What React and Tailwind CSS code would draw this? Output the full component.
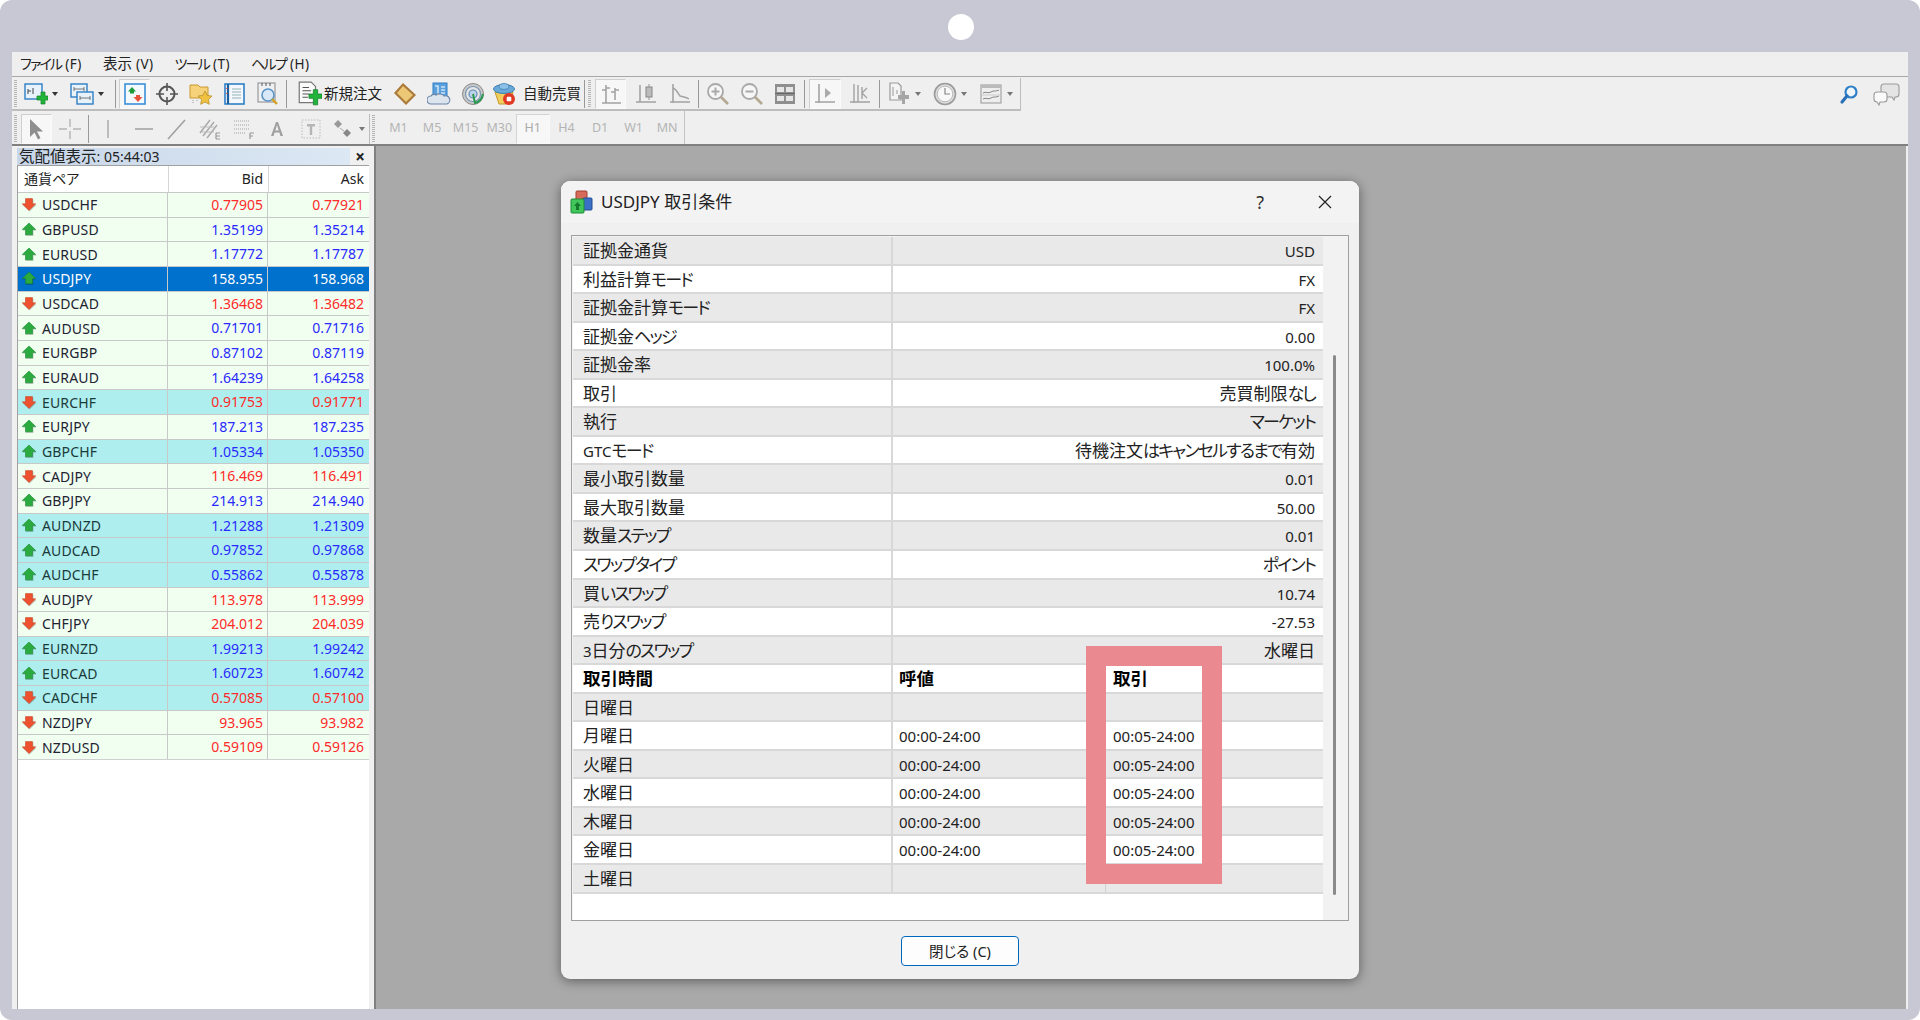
import React from "react";

const FONT = "font-['Noto_Sans','Noto_Sans_CJK_JP',sans-serif] [font-feature-settings:'palt']";

const quotes = [
  ["USDCHF","0.77905","0.77921","d",0],["GBPUSD","1.35199","1.35214","u",0],["EURUSD","1.17772","1.17787","u",0],
  ["USDJPY","158.955","158.968","u",2],["USDCAD","1.36468","1.36482","d",0],["AUDUSD","0.71701","0.71716","u",0],
  ["EURGBP","0.87102","0.87119","u",0],["EURAUD","1.64239","1.64258","u",0],["EURCHF","0.91753","0.91771","d",1],
  ["EURJPY","187.213","187.235","u",0],["GBPCHF","1.05334","1.05350","u",1],["CADJPY","116.469","116.491","d",0],
  ["GBPJPY","214.913","214.940","u",0],["AUDNZD","1.21288","1.21309","u",1],["AUDCAD","0.97852","0.97868","u",1],
  ["AUDCHF","0.55862","0.55878","u",1],["AUDJPY","113.978","113.999","d",0],["CHFJPY","204.012","204.039","d",0],
  ["EURNZD","1.99213","1.99242","u",1],["EURCAD","1.60723","1.60742","u",1],["CADCHF","0.57085","0.57100","d",1],
  ["NZDJPY","93.965","93.982","d",0],["NZDUSD","0.59109","0.59126","d",0],
];

const specs = [
  ["証拠金通貨","USD"],["利益計算モード","FX"],["証拠金計算モード","FX"],["証拠金ヘッジ","0.00"],["証拠金率","100.0%"],
  ["取引","売買制限なし"],["執行","マーケット"],["GTCモード","待機注文はキャンセルするまで有効"],["最小取引数量","0.01"],
  ["最大取引数量","50.00"],["数量ステップ","0.01"],["スワップタイプ","ポイント"],["買いスワップ","10.74"],["売りスワップ","-27.53"],
  ["3日分のスワップ","水曜日"],
];

const days = [
  ["日曜日","",""],["月曜日","00:00-24:00","00:05-24:00"],["火曜日","00:00-24:00","00:05-24:00"],["水曜日","00:00-24:00","00:05-24:00"],
  ["木曜日","00:00-24:00","00:05-24:00"],["金曜日","00:00-24:00","00:05-24:00"],["土曜日","",""],
];

// The original UI font sets kana and Latin narrower than its kanji.
function T({ children, latin = "text-[15px]", kana = "tracking-[-1.8px]" }) {
  if (!children) return null;
  return String(children)
    .split(/([\x20-\x7e]+|[\u3040-\u30ff]+)/)
    .filter(Boolean)
    .map((run, i) => {
      if (/^[\x20-\x7e]+$/.test(run)) return <span key={i} className={latin}>{run}</span>;
      if (/^[\u3040-\u30ff]+$/.test(run)) return <span key={i} className={kana}>{run}</span>;
      return <span key={i}>{run}</span>;
    });
}

function Arrow({ dir }) {
  const up = dir === "u";
  return (
    <svg width="15" height="15" viewBox="0 0 15 15" className="shrink-0">
      <path d={up ? "M7.5 2 14.5 8.5H11.5V14H3.5V8.5H.5Z" : "M7.5 14.5 14.5 8H11.5V2.5H3.5V8H.5Z"} fill="#00000030" />
      <path
        d={up ? "M7 1 13.8 7.6H10.5V12.8H3.5V7.6H.2Z" : "M7 13.4 13.8 6.8H10.5V1.6H3.5V6.8H.2Z"}
        fill={up ? "#2bab3f" : "#ee5130"}
        stroke={up ? "#12802a" : "#c2421f"}
        strokeWidth=".5"
      />
    </svg>
  );
}

function Caret() {
  return <span className="ml-[4px] h-0 w-0 border-x-[3.5px] border-t-[4px] border-x-transparent border-t-[#333]" />;
}
function GreyCaret() {
  return <span className="ml-[4px] h-0 w-0 border-x-[3.5px] border-t-[4px] border-x-transparent border-t-[#777]" />;
}
function Sep({ cls = "mx-[4px]" }) {
  return <span className={`h-[28px] w-px shrink-0 bg-[#999] ${cls}`} />;
}
function Grip() {
  return <span className="ml-[1px] mr-[4px] h-[28px] w-[3px] shrink-0 bg-[repeating-linear-gradient(#b5b5b5_0_1px,transparent_1px_2px)]" />;
}
function Slot({ w = 33, pressed, children }) {
  return (
    <span
      style={{ width: w }}
      className={`flex h-[30px] shrink-0 items-center justify-center ${pressed ? "border border-[#cfcfcf] border-r-[#fafafa] border-b-[#fafafa] bg-[#f7f7f7]" : ""}`}
    >
      {children}
    </span>
  );
}
function Ic({ s = 24, children }) {
  return <svg width={s} height={s} viewBox="0 0 24 24" fill="none">{children}</svg>;
}

const Plus = ({ c = "#22b43a", x = 0, y = 0 }) => (
  <path transform={`translate(${x} ${y})`} d="M13 10h4v-4h4v4h3v4h-3v4h-4v-4h-4z" fill={c} stroke={c === "#22b43a" ? "#11802a" : "#888"} strokeWidth=".7" />
);

const NewChart = () => (
  <Ic>
    <rect x="1" y="2" width="17" height="15" fill="#e8f2fb" stroke="#2f7fc6" strokeWidth="1.4" />
    <path d="M4 7v5M4 9h3M9 6v6" stroke="#444" strokeWidth="1" />
    <Plus y="4" />
  </Ic>
);
const Profiles = () => (
  <Ic>
    <rect x="1" y="2" width="16" height="13" fill="#e8f2fb" stroke="#2f7fc6" strokeWidth="1.4" />
    <rect x="7" y="10" width="16" height="12" fill="#e8f2fb" stroke="#2f7fc6" strokeWidth="1.4" />
    <path d="M4 7h10M4 5v4M14 5v4M10 16h10M10 14v4M20 14v4" stroke="#555" strokeWidth=".8" />
  </Ic>
);
const Watch = () => (
  <Ic>
    <rect x="2" y="2" width="20" height="20" fill="#f4f9fe" stroke="#3a8fd6" strokeWidth="1.6" />
    <path d="M9 5 13 9.5H11V11.5H7V9.5H5Z" fill="#1f9a3a" />
    <path d="M15 20 19.5 15H17V13H13V15H10.5Z" fill="#e8523a" />
  </Ic>
);
const Cross = () => (
  <Ic>
    <circle cx="12" cy="12" r="7.5" stroke="#555" strokeWidth="2" />
    <path d="M12 1v8M12 15v8M1 12h8M15 12h8" stroke="#555" strokeWidth="1.6" />
  </Ic>
);
const FolderStar = () => (
  <Ic>
    <path d="M1 3h8l2 2h8v11H1z" fill="#f6d27a" stroke="#c99a30" strokeWidth="1" />
    <path d="M4 18v3M8 18v2" stroke="#999" strokeWidth="1" strokeDasharray="1 1" />
    <path d="m16 9 2.2 4.4 4.8.7-3.5 3.4.8 4.8-4.3-2.3-4.3 2.3.8-4.8L9 14.1l4.8-.7z" fill="#f0c040" stroke="#b8902a" strokeWidth=".8" />
  </Ic>
);
const Book = () => (
  <Ic>
    <rect x="3" y="2" width="19" height="20" fill="#f4f8fc" stroke="#2f7fc6" strokeWidth="1.6" />
    <path d="M6 2v20" stroke="#1c5f9c" strokeWidth="2.2" />
    <path d="M10 7h9M10 10h9M10 13h9M10 16h9" stroke="#8aa" strokeWidth=".9" />
    <path d="M5 6v1M5 11v1" stroke="#d33" strokeWidth="1.4" />
  </Ic>
);
const Journal = () => (
  <Ic>
    <rect x="2" y="1" width="17" height="19" fill="#eef0f2" stroke="#9a9a9a" strokeWidth="1.2" />
    <path d="M6 1V4M10 1V4M14 1V4" stroke="#555" strokeWidth="1" />
    <circle cx="12" cy="13" r="6" fill="#d8e8f6" stroke="#5a94c8" strokeWidth="1.6" />
    <path d="m16 17 5 5" stroke="#d4a020" strokeWidth="2.4" />
  </Ic>
);
const NewOrder = () => (
  <Ic s={26}>
    <path d="M3 1h11l4 4v15H3z" fill="#fafafa" stroke="#777" strokeWidth="1.1" />
    <path d="M6 6h6M6 9h8M6 12h6M6 15h5" stroke="#555" strokeWidth="1" />
    <path d="M12 12h4V8h4v4h4v4h-4v6h-4v-6h-4z" fill="#22b43a" stroke="#11802a" strokeWidth=".7" />
  </Ic>
);
const Editor = () => (
  <Ic>
    <path d="M10 1 23 13 13 23 1 11Z" fill="#a97a3c" strokeLinejoin="round" />
    <path d="M10 4 20 13 13 20 4 11Z" fill="#ecc776" />
  </Ic>
);
const CloudDoc = () => (
  <Ic>
    <rect x="6" y="1" width="14" height="14" fill="#5aa0dc" stroke="#2f7fc6" strokeWidth="1" />
    <path d="M8 4h3v8M14 5h4M14 8h4M14 11h4" stroke="#fff" strokeWidth="1.1" />
    <path d="M4 22a4 4 0 0 1 0-8c1-2 4-2 5-1 2-2 7-1 8 1a4 4 0 0 1 3 8z" fill="#dce4ee" stroke="#6b86a8" strokeWidth="1.1" />
  </Ic>
);
const Signal = () => (
  <Ic>
    <circle cx="12" cy="12" r="10.5" fill="#c8c8c8" stroke="#8a8a8a" strokeWidth="1" />
    <circle cx="12" cy="12" r="7.5" fill="#e6e6e6" stroke="#7b96b4" strokeWidth="1.2" />
    <circle cx="12" cy="12" r="4" fill="#bcd2e8" stroke="#5f8db8" strokeWidth="1.2" />
    <path d="M12 12 14 21c4-1 7-4 8-9" stroke="#2a9a50" strokeWidth="2" />
  </Ic>
);
const Expert = () => (
  <Ic>
    <path d="M3 10h18l-3 12H7z" fill="#f2cd5c" stroke="#c39a30" strokeWidth="1" />
    <ellipse cx="12" cy="7" rx="10.5" ry="4.5" fill="#69a9d8" stroke="#3f7fb0" strokeWidth="1" />
    <ellipse cx="12" cy="4.5" rx="5" ry="3" fill="#8cc0e6" stroke="#3f7fb0" strokeWidth=".8" />
    <circle cx="17" cy="17" r="6" fill="#e03a24" />
    <rect x="14.7" y="14.7" width="4.6" height="4.6" rx="1" fill="#fff" />
  </Ic>
);

const grey = "#a3a3a3";
const Bars = () => (
  <Ic>
    <path d="M3 21h19M7 3v18M16 6v12" stroke={grey} strokeWidth="1.6" />
    <path d="M3 8h4M7 6h4M12 10h4M16 8h4" stroke={grey} strokeWidth="1.4" />
  </Ic>
);
const Candle = () => (
  <Ic>
    <path d="M2 20h20M6 3v17" stroke={grey} strokeWidth="1.6" />
    <path d="M15 2v16" stroke={grey} strokeWidth="1.2" />
    <rect x="12" y="5" width="6" height="10" fill="#bbb" stroke="#888" />
  </Ic>
);
const LineCh = () => (
  <Ic>
    <path d="M5 2v19M2 20h20" stroke={grey} strokeWidth="1.6" />
    <path d="M5 6c3 1 5 5 7 8 3 1 6 1 9 3" stroke={grey} strokeWidth="1.5" />
  </Ic>
);
const ZoomIn = ({ minus }) => (
  <Ic>
    <circle cx="9.5" cy="9.5" r="7.5" fill="#f6f6f6" stroke="#a8a8a8" strokeWidth="1.8" />
    <path d="M5.5 9.5h8" stroke="#aaa" strokeWidth="2" />
    {!minus && <path d="M9.5 5.5v8" stroke="#aaa" strokeWidth="2" />}
    <path d="m15 15 7 7" stroke="#b5a890" strokeWidth="2.6" />
  </Ic>
);
const Grid = () => (
  <Ic>
    <rect x="2" y="2" width="20" height="20" fill="#8f8f8f" />
    <path d="M4 5h7v5H4zM13 5h7v5h-7zM4 14h7v5H4zM13 14h7v5h-7z" fill="#e6e6e6" />
    <path d="M2 11.5h20" stroke="#666" />
  </Ic>
);
const Shift = () => (
  <Ic>
    <path d="M6 2v19M2 20h20" stroke={grey} strokeWidth="1.6" />
    <path d="M12 6v10l6-5z" fill="#aaa" />
  </Ic>
);
const AutoS = () => (
  <Ic>
    <path d="M6 2v19M2 20h20M10 3v17" stroke={grey} strokeWidth="1.4" />
    <path d="M14 5v12M14 11l5-5M14 11l5 5" stroke={grey} strokeWidth="1.4" />
  </Ic>
);
const Indic = () => (
  <Ic>
    <path d="M3 1h8l3 3v14H3z" fill="#f4f4f4" stroke="#999" strokeWidth="1.2" />
    <path d="M6 5v9M10 8v4" stroke="#999" />
    <path d="M11 13h4V9h3v4h4v4h-4v5h-3v-5h-4z" fill="#a5a5a5" />
  </Ic>
);
const Clock = () => (
  <Ic>
    <circle cx="12" cy="12" r="10.5" fill="#ddd" stroke="#9a9a9a" strokeWidth="1.6" />
    <circle cx="12" cy="12" r="7.8" fill="#f8f8f8" stroke="#bbb" />
    <path d="M12 6v6h5" stroke="#888" strokeWidth="1.2" />
  </Ic>
);
const Tmpl = () => (
  <Ic>
    <rect x="2" y="3" width="20" height="18" fill="#eee" stroke="#a5a5a5" strokeWidth="1.2" />
    <rect x="2" y="3" width="20" height="3" fill="#bbb" />
    <path d="M4 11c3-2 5 1 8-1s4 0 8-2M4 17c3-2 5 1 8-1s4 0 8-2" stroke="#888" />
    <path d="M3 13h18" stroke="#ccc" />
  </Ic>
);

const Pointer = () => (
  <Ic>
    <path d="M5 2v18l4.5-4.5 3.5 7 2.5-1.5-3.5-6.5H18Z" fill="#8e8e8e" />
  </Ic>
);
const CrossLine = () => (
  <Ic>
    <path d="M12 2v8M12 14v8M1 12h8M15 12h8" stroke="#b5b5b5" strokeWidth="1.4" />
  </Ic>
);
const VLine = () => <Ic><path d="M12 3v18" stroke="#b0b0b0" strokeWidth="1.6" /></Ic>;
const HLine = () => <Ic><path d="M3 12h18" stroke="#a5a5a5" strokeWidth="1.6" /></Ic>;
const TLine = () => <Ic><path d="M3 22 20 3" stroke="#a0a0a0" strokeWidth="1.6" /></Ic>;
const Channel = () => (
  <Ic>
    <path d="M2 16 12 3M5 19 16 5M9 21 19 8" stroke="#aaa" strokeWidth="1.5" />
    <path d="M2 10h14M4 15h12" stroke="#bbb" />
    <path d="M18 16h4M18 19h4M18 22h4M18 16v6" stroke="#999" strokeWidth="1.2" />
  </Ic>
);
const Fibo = () => (
  <Ic>
    <path d="M2 4h16M2 8h16M2 12h16M2 16h12" stroke="#bdbdbd" strokeWidth="1.3" strokeDasharray="1 1" />
    <path d="M18 16h4M18 19h3M18 16v6" stroke="#999" strokeWidth="1.2" />
  </Ic>
);
const Letter = () => (
  <Ic><path d="M11 5h2L18 19h-2.6l-1-3.4H9.6L8.6 19H6ZM10.3 13.4h3.4L12 8Z" fill="#a0a0a0" /></Ic>
);
const LabelT = () => (
  <Ic>
    <rect x="3" y="3" width="18" height="18" stroke="#bbb" strokeDasharray="1.5 1.5" />
    <path d="M8 7h8v2.5h-2.8V18h-2.4V9.5H8z" fill="#b5b5b5" />
  </Ic>
);
const Marks = () => (
  <Ic>
    <path d="m7 3 4 4-4 4-4-4z" fill="#999" />
    <path d="m16 12 4 4-4 4-4-4z" fill="#888" />
    <path d="M9 11l4 3" stroke="#aaa" />
  </Ic>
);

function Magnifier() {
  return (
    <svg width="20" height="22" viewBox="0 0 20 22" fill="none">
      <circle cx="12" cy="8" r="5.5" fill="#eef5fb" stroke="#2f7fc6" strokeWidth="2.2" />
      <path d="M8 12 3 18" stroke="#2a70b8" strokeWidth="3.2" strokeLinecap="round" />
    </svg>
  );
}
function Chat() {
  return (
    <svg width="28" height="24" viewBox="0 0 28 24" fill="none">
      <path d="M11 1h12a3 3 0 0 1 3 3v7a3 3 0 0 1-3 3h-1l-1 3-2-3h-8a3 3 0 0 1-3-3V4a3 3 0 0 1 3-3Z" fill="#e4e4e4" stroke="#9a9a9a" strokeWidth="1.1" />
      <path d="M4 9h7a3 3 0 0 1 3 3v4a3 3 0 0 1-3 3H7l-1 3-2-3a3 3 0 0 1-3-3v-4a3 3 0 0 1 3-3Z" fill="#fafafa" stroke="#9a9a9a" strokeWidth="1.1" />
    </svg>
  );
}

function DialogIcon() {
  return (
    <svg width="23" height="24" viewBox="0 0 23 24">
      <rect x="6" y="1" width="11" height="10" rx="1" fill="#d86a5a" stroke="#a04030" />
      <rect x="13" y="8" width="9" height="12" rx="1" fill="#3a70c8" stroke="#244c90" />
      <rect x="1" y="9" width="13" height="14" rx="1" fill="#3fc75a" stroke="#1f8a36" />
      <path d="M7.5 12 11 16H9v4H6v-4H4z" fill="#167a2c" />
    </svg>
  );
}

function ToolbarTop() {
  return (
    <div className="flex h-[33px] w-[1009px] items-center border-b-2 border-r border-[#bdbdbd] pl-[1px] pt-[1px]">
      <Grip />
      <span className="ml-[3px] flex w-[46px] shrink-0 items-center"><NewChart /><Caret /></span>
      <span className="flex w-[46px] shrink-0 items-center"><Profiles /><Caret /></span>
      <Sep cls="mr-[3px] ml-[-1px]" />
      <Slot w={31} pressed><Watch /></Slot>
      <Slot w={34}><Cross /></Slot>
      <Slot w={33}><FolderStar /></Slot>
      <Slot w={33}><Book /></Slot>
      <Slot w={35}><Journal /></Slot>
      <Sep cls="mx-[1px]" />
      <span className="ml-[8px] flex w-[92px] shrink-0 items-center gap-[2px] text-[14.5px] text-[#222]"><NewOrder /><span className="whitespace-nowrap">新規注文</span></span>
      <Slot w={34}><Editor /></Slot>
      <Slot w={34}><CloudDoc /></Slot>
      <Slot w={34}><Signal /></Slot>
      <span className="flex w-[102px] shrink-0 items-center gap-[7px] pl-[2px] text-[14.5px] text-[#222]"><Expert /><span className="whitespace-nowrap">自動売買</span></span>
      <Sep cls="ml-[-8px] mr-[2px]" />
      <Grip />
      <Slot w={31} pressed><Bars /></Slot>
      <Slot w={39}><Candle /></Slot>
      <Slot w={30}><LineCh /></Slot>
      <Sep cls="ml-[3px] mr-[2px]" />
      <Slot w={34}><ZoomIn /></Slot>
      <Slot w={33}><ZoomIn minus /></Slot>
      <Slot w={34}><Grid /></Slot>
      <Sep cls="ml-[2px] mr-[4px]" />
      <Slot w={32} pressed><Shift /></Slot>
      <Slot w={37}><AutoS /></Slot>
      <Sep cls="mx-[1px]" />
      <span className="ml-[6px] flex w-[46px] shrink-0 items-center"><Indic /><GreyCaret /></span>
      <span className="flex w-[46px] shrink-0 items-center"><Clock /><GreyCaret /></span>
      <span className="flex w-[36px] shrink-0 items-center"><Tmpl /><GreyCaret /></span>
    </div>
  );
}

function ToolbarBottom() {
  const tfs = ["M1","M5","M15","M30","H1","H4","D1","W1","MN"];
  return (
    <div className="flex h-[33px] w-[673px] items-center border-r border-[#c4c4c4] pl-[1px] pt-[2px]">
      <Grip />
      <Slot w={31} pressed><Pointer /></Slot>
      <Slot w={36}><CrossLine /></Slot>
      <Sep cls="mx-[0px]" />
      <Slot w={38}><VLine /></Slot>
      <Slot w={33}><HLine /></Slot>
      <Slot w={33}><TLine /></Slot>
      <Slot w={34}><Channel /></Slot>
      <Slot w={33}><Fibo /></Slot>
      <Slot w={34}><Letter /></Slot>
      <Slot w={33}><LabelT /></Slot>
      <span className="ml-[1px] flex w-[46px] items-center justify-center"><Marks /><GreyCaret /></span>
      <span className="mr-[1px] h-[30px] w-px bg-[#bdbdbd]" />
      <Grip />
      <div className="ml-[3px] flex items-center text-[12.5px] text-[#b4b4b4]">
        {tfs.map((t) => (
          <span key={t} className={`flex h-[30px] w-[33.6px] items-center justify-center ${t === "H1" ? "border border-[#d4d4d4] border-r-[#fafafa] border-b-[#fafafa] bg-[#f7f7f7] text-[#aaa]" : ""}`}>{t}</span>
        ))}
      </div>
    </div>
  );
}

function MarketWatch() {
  return (
    <aside className="flex w-[364px] shrink-0 flex-col border-r-2 border-[#808080] bg-[#f0f0f0] pl-[5px] pr-[5px]">
      <div className="flex h-[19px] items-end justify-between">
        <div className="flex h-[17px] w-[333px] items-center bg-gradient-to-r from-[#c7d6e8] to-[#dce8f4] pl-[2px] text-[15.5px] leading-none text-[#222]">
          <span><T latin="text-[14px]" kana="">気配値表示: 05:44:03</T></span>
        </div>
        <span className="w-[18px] text-center text-[17px] font-bold leading-[17px] text-[#222]">×</span>
      </div>
      <div className="flex flex-1 flex-col border-l border-t border-[#a0a0a0] bg-white">
        <div className="flex h-[26px] text-[14px] text-[#222]">
          <span className="w-[151px] border-r border-[#d6d6d6] pl-[6px] leading-[26px]">通貨ペア</span>
          <span className="w-[100px] border-r border-[#d6d6d6] pr-[5px] text-right leading-[26px]">Bid</span>
          <span className="w-[100px] pr-[5px] text-right leading-[26px]">Ask</span>
        </div>
        {quotes.map(([sym, bid, ask, dir, kind]) => {
          const bg = kind === 2 ? "bg-[#0071cc] text-white" : kind === 1 ? "bg-[#aeeeee] text-[#1b3a3a]" : "bg-[#f0fff0] text-[#223]";
          const num = kind === 2 ? "text-white" : dir === "u" ? "text-[#2a2aff]" : "text-[#ff2a2a]";
          return (
            <div key={sym} className={`flex h-[24.67px] border-t border-[#c8c8c8] text-[14px] leading-[23px] ${bg}`}>
              <span className="flex w-[150px] items-center gap-[5px] border-r border-[#c8c8c8] pl-[4px] tracking-[0.15px]"><Arrow dir={dir} />{sym}</span>
              <span className={`w-[100px] border-r border-[#c8c8c8] pr-[4px] text-right ${num}`}>{bid}</span>
              <span className={`w-[101px] pr-[5px] text-right ${num}`}>{ask}</span>
            </div>
          );
        })}
        <div className="h-px bg-[#d0d0d0]" />
      </div>
    </aside>
  );
}

function Row({ alt, a, b, c, bold, span }) {
  const bg = alt ? "bg-[#e9e9e9]" : "bg-white";
  const weight = bold ? "text-[17.5px] font-bold text-black" : "text-[17px] text-[#222]";
  return (
    <div className={`flex h-[28.55px] border-b-2 border-[#d8d8d8] leading-[27px] ${bg} ${weight}`}>
      <span className="w-[320px] shrink-0 border-r-2 border-[#d8d8d8] pl-[10px]"><T>{a}</T></span>
      {span ? (
        <span className="flex-1 pr-[8px] text-right"><T>{b}</T></span>
      ) : (
        <>
          <span className="w-[213px] shrink-0 border-r border-[#d0d0d0] pl-[6px]"><T>{b}</T></span>
          <span className="flex-1 pl-[7px]"><T>{c}</T></span>
        </>
      )}
    </div>
  );
}

function Dialog() {
  return (
    <div className="absolute left-[561px] top-[181px] flex h-[798px] w-[798px] flex-col rounded-[9px] bg-[#f0f0f0] shadow-[0_2px_12px_rgba(0,0,0,0.45)]">
      <div className="flex h-[42px] items-center rounded-t-[9px] bg-[#f3f3f3] pl-[9px] pr-[27px] text-[17px] text-[#222]">
        <DialogIcon />
        <span className="ml-[8px]">USDJPY 取引条件</span>
        <span className="ml-auto mr-[54px] text-[18px] text-[#333]">?</span>
        <svg width="14" height="14" viewBox="0 0 14 14"><path d="M1 1l12 12M13 1 1 13" stroke="#222" strokeWidth="1.2" /></svg>
      </div>
      <div className="relative mx-[10px] mt-[12px] flex h-[686px] border border-[#a0a0a0] bg-[#f2f2f2] pl-px pt-px">
        <div className="w-[750px] bg-white">
          {specs.map(([a, b], i) => <Row key={a} alt={i % 2 === 0} a={a} b={b} span />)}
          <Row a="取引時間" b="呼値" c="取引" bold />
          {days.map(([a, b, c], i) => <Row key={a} alt={i % 2 === 0} a={a} b={b} c={c} />)}
        </div>
        <div className="flex flex-1 items-end justify-center pb-[25px] pr-[3px]">
          <span className="h-[540px] w-[3px] rounded-full bg-[#8a8a8a]" />
        </div>
        <div className="absolute left-[514px] top-[410px] h-[238px] w-[136px] border-[20px] border-[#ea8a90]" />
      </div>
      <div className="flex flex-1 items-start justify-center pt-[15px]">
        <button className="h-[30px] w-[118px] rounded-[4px] border border-[#0067c0] bg-[#fdfdfd] text-[14.5px] leading-[27px] text-[#222]">閉じる (C)</button>
      </div>
    </div>
  );
}

export default function App() {
  return (
    <div className={`relative h-[1020px] w-[1920px] overflow-hidden bg-white ${FONT}`}>
      <div className="flex h-full flex-col rounded-xl bg-[#c8c8d4] pb-[11px] pl-[12px] pr-[12px] pt-[52px]">
        <div className="flex min-h-0 flex-1 flex-col bg-[#efefef]">
          <nav className="flex h-[25px] items-center gap-[21px] border-b border-[#a8a8a8] pl-[8px] text-[14.5px] text-[#222]">
            {["ファイル (F)", "表示 (V)", "ツール (T)", "ヘルプ (H)"].map((m) => (
              <span key={m}><T latin="text-[13.5px] tracking-[0.5px]" kana="text-[14px] tracking-[-1.8px]">{m}</T></span>
            ))}
          </nav>
          <div className="relative flex h-[34px] items-center justify-between pr-[7px]">
            <ToolbarTop />
            <div className="flex items-center gap-[14px] pt-[1px]"><Magnifier /><Chat /></div>
          </div>
          <ToolbarBottom />
          <div className="flex min-h-0 flex-1 border-t-2 border-[#808080]">
            <MarketWatch />
            <main className="mr-[2px] flex-1 bg-[#a9a9a9]" />
          </div>
        </div>
      </div>
      <div className="absolute left-[961px] top-[27px] -ml-[13px] -mt-[13px] h-[26px] w-[26px] rounded-full bg-white" />
      <Dialog />
    </div>
  );
}
